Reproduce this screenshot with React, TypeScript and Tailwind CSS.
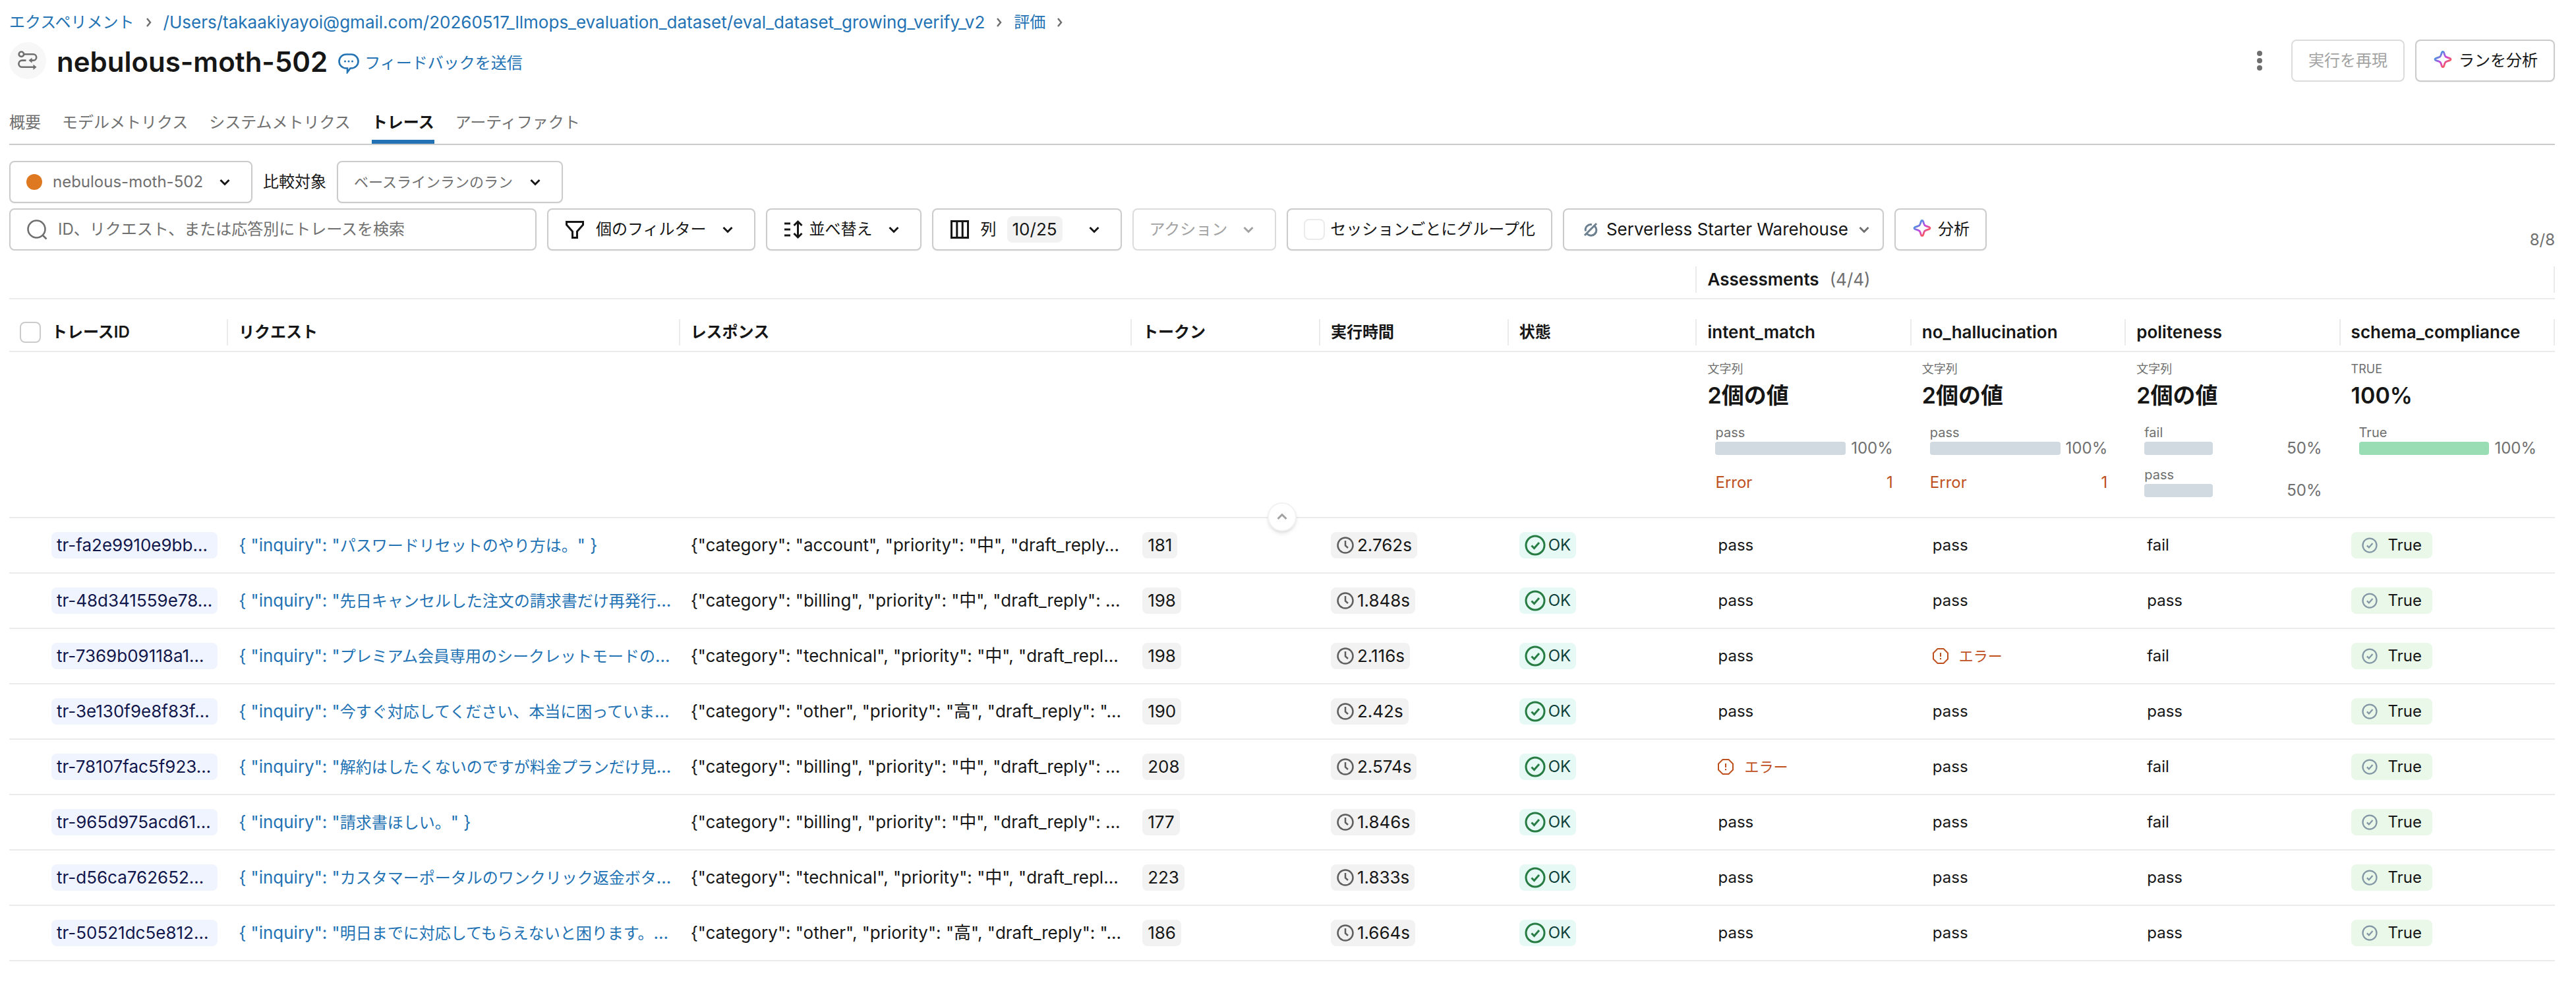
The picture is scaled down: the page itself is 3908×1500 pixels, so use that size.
import { useId, useState } from "react"
import type { ReactNode } from "react"
import { clsx } from "clsx"

const breadcrumbs = [
  { label: "エクスペリメント", className: "text-2xl" },
  {
    label: "/Users/takaakiyayoi@gmail.com/20260517_llmops_evaluation_dataset/eval_dataset_growing_verify_v2",
    className: "text-[26px]",
  },
  { label: "評価", className: "text-2xl" },
]

const tabs = ["概要", "モデルメトリクス", "システムメトリクス", "トレース", "アーティファクト"]

const columns = ["リクエスト", "レスポンス", "トークン", "実行時間", "状態"]

type Assessment = {
  name: string
  type: string
  value: string
  bars: { label: string; percent: number }[]
  barClass: string
  errors?: number
}

const assessments: Assessment[] = [
  { name: "intent_match", type: "文字列", value: "2個の値", bars: [{ label: "pass", percent: 100 }], barClass: "bg-[#d1d9e1]", errors: 1 },
  { name: "no_hallucination", type: "文字列", value: "2個の値", bars: [{ label: "pass", percent: 100 }], barClass: "bg-[#d1d9e1]", errors: 1 },
  {
    name: "politeness",
    type: "文字列",
    value: "2個の値",
    bars: [
      { label: "fail", percent: 50 },
      { label: "pass", percent: 50 },
    ],
    barClass: "bg-[#d1d9e1]",
  },
  { name: "schema_compliance", type: "TRUE", value: "100%", bars: [{ label: "True", percent: 100 }], barClass: "bg-[#99ddb4]" },
]

const traces = [
  { id: "tr-fa2e9910e9bb...", inquiry: "パスワードリセットのやり方は。", end: '" }', response: '{"category": "account", "priority": "中", "draft_reply...', tokens: 181, time: "2.762s", results: ["pass", "pass", "fail"] },
  { id: "tr-48d341559e78...", inquiry: "先日キャンセルした注文の請求書だけ再発行", end: "...", response: '{"category": "billing", "priority": "中", "draft_reply": ...', tokens: 198, time: "1.848s", results: ["pass", "pass", "pass"] },
  { id: "tr-7369b09118a1...", inquiry: "プレミアム会員専用のシークレットモードの", end: "...", response: '{"category": "technical", "priority": "中", "draft_repl...', tokens: 198, time: "2.116s", results: ["pass", "error", "fail"] },
  { id: "tr-3e130f9e8f83f...", inquiry: "今すぐ対応してください、本当に困っていま", end: "...", response: '{"category": "other", "priority": "高", "draft_reply": "...', tokens: 190, time: "2.42s", results: ["pass", "pass", "pass"] },
  { id: "tr-78107fac5f923...", inquiry: "解約はしたくないのですが料金プランだけ見", end: "...", response: '{"category": "billing", "priority": "中", "draft_reply": ...', tokens: 208, time: "2.574s", results: ["error", "pass", "fail"] },
  { id: "tr-965d975acd61...", inquiry: "請求書ほしい。", end: '" }', response: '{"category": "billing", "priority": "中", "draft_reply": ...', tokens: 177, time: "1.846s", results: ["pass", "pass", "fail"] },
  { id: "tr-d56ca762652...", inquiry: "カスタマーポータルのワンクリック返金ボタ", end: "...", response: '{"category": "technical", "priority": "中", "draft_repl...', tokens: 223, time: "1.833s", results: ["pass", "pass", "pass"] },
  { id: "tr-50521dc5e812...", inquiry: "明日までに対応してもらえないと困ります。", end: "...", response: '{"category": "other", "priority": "高", "draft_reply": "...', tokens: 186, time: "1.664s", results: ["pass", "pass", "pass"] },
]

const control = "flex h-16 items-center rounded-lg border-2 border-[#cbcbcb] bg-white shadow-xs whitespace-nowrap"

function Chevron({ className }: { className?: string }) {
  return (
    <svg viewBox="0 0 32 32" fill="none" stroke="currentColor" strokeWidth="3" className={clsx("pointer-events-none size-8 shrink-0", className)}>
      <path d="M9.500 13l6.500 6.500 6.500-6.500" />
    </svg>
  )
}

function Sparkle() {
  const id = useId()
  return (
    <svg viewBox="0 0 32 32" fill="none" className="size-8 shrink-0">
      <defs>
        <linearGradient id={id} x1="5" y1="4" x2="26" y2="26" gradientUnits="userSpaceOnUse">
          <stop offset="0.15" stopColor="#4299e0" />
          <stop offset="0.5" stopColor="#ca42e0" />
          <stop offset="0.85" stopColor="#ff5f46" />
        </linearGradient>
      </defs>
      <path
        d="M16 2.500c.9 0 1.400.6 1.700 1.500l1.100 3.700c.5 1.700 1.500 2.700 3.200 3.200l4.500 1.400c2 .7 2 2.700 0 3.400l-4.500 1.400c-1.700.5-2.700 1.500-3.200 3.200L17.700 24c-.6 2-2.800 2-3.400 0l-1.100-3.700c-.5-1.700-1.500-2.700-3.200-3.200l-4.500-1.400c-2-.7-2-2.700 0-3.400l4.500-1.400c1.700-.5 2.700-1.500 3.200-3.200L14.300 4c.3-.9.8-1.500 1.700-1.500z"
        stroke={`url(#${id})`}
        strokeWidth="2.800"
        strokeLinejoin="round"
      />
    </svg>
  )
}

function RunIcon() {
  return (
    <svg viewBox="0 0 30 30" fill="none" stroke="currentColor" strokeWidth="2.600" className="size-[30px]">
      <circle cx="5.400" cy="5.200" r="3.700" />
      <path d="M9.500 5.200h14a4.700 4.700 0 0 1 0 9.400H20" />
      <path d="M12.500 14.600H6.500a5 5 0 0 0 0 10.200H25" />
      <path d="M21.500 10.500v8.200l-5-4.100zM23.500 20.700v8.200l5-4.100z" fill="currentColor" stroke="none" />
    </svg>
  )
}

function FeedbackIcon() {
  return (
    <svg viewBox="0 0 32 32" fill="none" className="size-8">
      <path
        d="M12 2.500h8a10.500 10.500 0 0 1 0 21h-1.500L14 29.500v-6h-2a10.500 10.500 0 0 1 0-21z"
        stroke="currentColor"
        strokeWidth="2.600"
      />
      <circle cx="10.500" cy="13" r="1.500" fill="currentColor" />
      <circle cx="16" cy="13" r="1.500" fill="currentColor" />
      <circle cx="21.500" cy="13" r="1.500" fill="currentColor" />
    </svg>
  )
}

function CheckCircle({ className }: { className: string }) {
  return (
    <svg viewBox="0 0 32 32" fill="none" stroke="currentColor" strokeWidth="3" className={className}>
      <circle cx="16" cy="16" r="14" />
      <path d="M10.500 16.500l4 4 7.500-8.500" />
    </svg>
  )
}

function ErrorResult() {
  return (
    <span className="flex items-center gap-4 pl-4 text-[22px] text-[#be501e]">
      <svg viewBox="0 0 24 24" fill="none" stroke="currentColor" strokeWidth="2" className="size-6">
        <path d="M7.500 1h9L23 7.500v9L16.500 23h-9L1 16.500v-9z" />
        <path d="M12 7v6M12 15v2.200" />
      </svg>
      エラー
    </span>
  )
}

function HeaderCell({ children, className }: { children?: ReactNode; className?: string }) {
  return (
    <div className="flex h-[78px] items-end pb-2">
      <div className={clsx("flex h-10 flex-1 items-center border-r-2 border-[#ebebeb] pl-4", className)}>{children}</div>
    </div>
  )
}

function Summary({ item }: { item: Assessment }) {
  return (
    <div className="flex h-[250px] flex-col px-4 pt-3">
      <span className="text-lg leading-7 text-[#6f6f6f]">{item.type}</span>
      <span className="text-[34px] leading-[52px] font-semibold">{item.value}</span>
      <div className="flex flex-col gap-4 px-3 pt-4 text-[#6f6f6f]">
        {item.bars.map((bar) => (
          <div key={bar.label}>
            <div className="text-xl leading-7">{bar.label}</div>
            <div className="flex h-5 items-center gap-2">
              <div className="flex-1">
                <div className={clsx("h-5 rounded", item.barClass)} style={{ width: `${bar.percent}%` }} />
              </div>
              <span>{bar.percent}%</span>
            </div>
          </div>
        ))}
        {item.errors && (
          <div className="flex justify-between pt-[10px] text-[#be501e]">
            <span>Error</span>
            <span>{item.errors}</span>
          </div>
        )}
      </div>
    </div>
  )
}

export default function App() {
  const [activeTab, setActiveTab] = useState("トレース")
  const [showSummary, setShowSummary] = useState(true)

  return (
    <main className="min-h-screen bg-white pr-8 pl-[14px] font-['Inter','Noto_Sans_CJK_JP',sans-serif] text-2xl leading-8 text-[#161616]">
      <nav className="flex items-center gap-4 pt-[18px] text-[#2272b4]">
        {breadcrumbs.map((crumb) => (
          <span key={crumb.label} className="flex items-center gap-4">
            <a href="#" className={clsx("leading-8 hover:underline", crumb.className)}>{crumb.label}</a>
            <svg viewBox="0 0 12 16" fill="none" stroke="#6f6f6f" strokeWidth="2.500" className="h-4 w-3">
              <path d="M3 2l5 6-5 6" />
            </svg>
          </span>
        ))}
      </nav>

      <header className="mt-[10px] flex h-16 items-center justify-between">
        <div className="flex items-center gap-4">
          <span className="flex size-14 items-center justify-center rounded-full bg-[#f7f7f7] text-[#6f6f6f]">
            <RunIcon />
          </span>
          <h1 className="pt-1 text-[42px] leading-[52px] font-semibold">nebulous-moth-502</h1>
          <a href="#" className="flex items-center gap-2 pt-2 text-[#2272b4]">
            <FeedbackIcon />
            フィードバックを送信
          </a>
        </div>
        <div className="flex items-center gap-4">
          <button aria-label="その他" className="flex size-16 items-center justify-center text-[#6f6f6f]">
            <svg viewBox="0 0 8 32" fill="currentColor" className="h-8 w-2">
              <circle cx="4" cy="5" r="4" />
              <circle cx="4" cy="16" r="4" />
              <circle cx="4" cy="27" r="4" />
            </svg>
          </button>
          <button disabled className="flex h-16 items-center rounded-lg border-2 border-[#dcdcdc] px-6 text-[#a2a2a2]">
            実行を再現
          </button>
          <button className={clsx(control, "gap-2 px-6")}>
            <Sparkle />
            ランを分析
          </button>
        </div>
      </header>

      <div role="tablist" className="mt-6 flex gap-8 border-b-2 border-[#cbcbcb]">
        {tabs.map((tab) => (
          <button
            key={tab}
            role="tab"
            aria-selected={tab === activeTab}
            onClick={() => setActiveTab(tab)}
            className={clsx(
              "flex h-[70px] items-center border-b-6 pt-3",
              tab === activeTab ? "border-[#2272b4] font-semibold" : "border-transparent text-[#6f6f6f]",
            )}
          >
            {tab}
          </button>
        ))}
      </div>

      <div className="mt-6 flex items-center gap-4">
        <div className={clsx(control, "gap-4 px-6")}>
          <span className="size-6 rounded-full bg-[#de7921]" />
          <select aria-label="ラン" className="appearance-none bg-transparent text-[#6f6f6f] outline-none">
            <option>nebulous-moth-502</option>
          </select>
          <Chevron />
        </div>
        <label htmlFor="baseline">比較対象</label>
        <div className={clsx(control, "gap-4 px-6")}>
          <select id="baseline" className="appearance-none bg-transparent text-[22px] text-[#6f6f6f] outline-none">
            <option>ベースラインランのラン</option>
          </select>
          <Chevron />
        </div>
      </div>

      <div className="mt-2 flex items-end justify-between">
        <div className="flex gap-4">
          <label className="flex h-16 w-200 items-center gap-4 rounded-lg border-2 border-[#cbcbcb] px-6 text-[#6f6f6f]">
            <svg viewBox="0 0 32 32" fill="none" stroke="currentColor" strokeWidth="2.600" className="size-8 shrink-0">
              <circle cx="15.500" cy="15.500" r="13" />
              <path d="M24.500 24.500l6 6" />
            </svg>
            <input
              type="text"
              aria-label="トレースを検索"
              placeholder="ID、リクエスト、または応答別にトレースを検索"
              className="flex-1 bg-transparent outline-none placeholder:text-[#6f6f6f]"
            />
          </label>
          <button className={clsx(control, "gap-4 px-6")}>
            <svg viewBox="0 0 32 32" fill="none" stroke="currentColor" strokeWidth="3" className="size-8">
              <path d="M3.500 4.500h25v4.500l-9 10v9.500h-7V19l-9-10z" />
            </svg>
            個のフィルター
            <Chevron />
          </button>
          <button className={clsx(control, "px-6")}>
            <svg viewBox="0 0 32 32" fill="none" stroke="currentColor" strokeWidth="3" className="mr-2 size-8">
              <path d="M2 7h9M2 16h9M2 25h9" />
              <path d="M22.500 4.500v23M16.500 10l6-6 6 6M16.500 22l6 6 6-6" />
            </svg>
            並べ替え
            <Chevron className="ml-4" />
          </button>
          <button className={clsx(control, "gap-4 px-6")}>
            <svg viewBox="0 0 32 32" fill="none" stroke="currentColor" strokeWidth="3" className="size-8">
              <path d="M3.500 3.500h25v25h-25zM11.800 3.500v25M20.200 3.500v25" />
            </svg>
            列
            <span className="rounded-lg bg-[#f2f2f2] px-2 py-1 text-[26px] leading-8">10/25</span>
            <Chevron className="ml-4" />
          </button>
          <button disabled className="flex h-16 items-center gap-4 rounded-lg border-2 border-[#dcdcdc] px-6 text-[#a2a2a2]">
            アクション
            <Chevron />
          </button>
          <label className={clsx(control, "gap-2 px-6")}>
            <input type="checkbox" className="size-8 appearance-none rounded-lg border-2 border-[#ebebeb] checked:bg-[#2272b4]" />
            セッションごとにグループ化
          </label>
          <div className={clsx(control, "gap-2 pr-3 pl-6")}>
            <svg viewBox="0 0 32 32" fill="none" stroke="#6c7f8e" strokeWidth="3" className="size-8">
              <path d="M8.500 18.500a8 8 0 0 1 9.500-9.700M22.300 11a7.800 7.800 0 0 1-11.300 12M7 25L25 7" />
            </svg>
            <select aria-label="ウェアハウス" className="appearance-none bg-transparent text-[26px] leading-8 outline-none">
              <option>Serverless Starter Warehouse</option>
            </select>
            <Chevron className="text-[#6f6f6f]" />
          </div>
          <button className={clsx(control, "gap-2 px-6")}>
            <Sparkle />
            分析
          </button>
        </div>
        <span className="text-[#6f6f6f]">8/8</span>
      </div>

      <div className="relative">
        <table className="w-full table-fixed border-separate border-spacing-0 text-left [&_td]:border-b-2 [&_td]:border-[#ebebeb] [&_td]:p-0 [&_th]:border-b-2 [&_th]:border-[#ebebeb] [&_th]:p-0 [&_th]:font-semibold">
          <colgroup>
            <col className="w-[8.6%]" />
            <col className="w-[17.75%]" />
            <col className="w-[17.75%]" />
            <col className="w-[7.4%]" />
            <col className="w-[7.4%]" />
            <col className="w-[7.4%]" />
            <col />
            <col />
            <col />
            <col />
          </colgroup>
          <thead>
            <tr>
              <th colSpan={6}>
                <div className="flex h-[72px] items-end pb-2">
                  <div className="h-10 flex-1 border-r-2 border-[#ebebeb]" />
                </div>
              </th>
              <th colSpan={4}>
                <div className="flex h-[72px] items-end pb-2">
                  <div className="flex h-10 flex-1 items-center gap-4 border-r-2 border-[#ebebeb] pl-4 text-[26px] leading-8">
                    Assessments
                    <span className="font-normal text-[#6f6f6f]">(4/4)</span>
                  </div>
                </div>
              </th>
            </tr>
            <tr>
              <th>
                <HeaderCell className="gap-4">
                  <input type="checkbox" aria-label="すべて選択" className="size-8 appearance-none rounded-lg border-2 border-[#cbcbcb] checked:bg-[#2272b4]" />
                  トレースID
                </HeaderCell>
              </th>
              {columns.map((column) => (
                <th key={column}>
                  <HeaderCell>{column}</HeaderCell>
                </th>
              ))}
              {assessments.map((item) => (
                <th key={item.name}>
                  <HeaderCell className="text-[26px] leading-8">{item.name}</HeaderCell>
                </th>
              ))}
            </tr>
          </thead>
          <tbody>
            {showSummary && (
              <tr>
                <td colSpan={6} />
                {assessments.map((item) => (
                  <td key={item.name} className="align-top">
                    <Summary item={item} />
                  </td>
                ))}
              </tr>
            )}
            {traces.map((trace) => (
              <tr key={trace.id} className="h-[84px] whitespace-nowrap">
                <td>
                  <div className="mr-4 ml-16 rounded-lg bg-[#f0f4ff] px-2 py-1 text-[26px] leading-8 text-[#12174b]">{trace.id}</div>
                </td>
                <td>
                  <a href="#" className="block pl-4 text-[26px] leading-8 text-[#2272b4]">
                    {'{ "inquiry": "'}
                    <span className="text-2xl">{trace.inquiry}</span>
                    {trace.end}
                  </a>
                </td>
                <td>
                  <div className="pl-4 text-[26px] leading-8">{trace.response}</div>
                </td>
                <td>
                  <span className="ml-4 inline-block rounded-lg bg-[#f2f2f2] px-2 py-1 align-middle text-[26px] leading-8">{trace.tokens}</span>
                </td>
                <td>
                  <span className="ml-4 inline-flex items-center gap-1 rounded-lg bg-[#f2f2f2] px-2 py-1 align-middle text-[26px] leading-8">
                    <svg viewBox="0 0 28 28" fill="none" stroke="#5f5f5f" strokeWidth="2.500" className="size-7">
                      <circle cx="14" cy="14" r="11.500" />
                      <path d="M14 7v7.500l4 3.500" />
                    </svg>
                    {trace.time}
                  </span>
                </td>
                <td>
                  <span className="ml-4 inline-flex items-center gap-1 rounded-lg bg-[#e6f9f4] px-2 py-1 align-middle text-[#0f3f3a]">
                    <CheckCircle className="size-8 text-[#277c43]" />
                    OK
                  </span>
                </td>
                {trace.results.map((result, i) => (
                  <td key={i}>
                    <div className="pl-4">{result === "error" ? <ErrorResult /> : <span className="pl-4">{result}</span>}</div>
                  </td>
                ))}
                <td>
                  <span className="ml-4 inline-flex items-center gap-4 rounded-lg bg-[#e9f8e8] px-4 py-1 align-middle">
                    <CheckCircle className="size-6 text-[#8396a5]" />
                    True
                  </span>
                </td>
              </tr>
            ))}
          </tbody>
        </table>
        <button
          aria-label="サマリーを切り替え"
          onClick={() => setShowSummary(!showSummary)}
          className="absolute top-[382px] left-1/2 flex size-11 -translate-x-1/2 items-center justify-center rounded-full border-2 border-[#f2f2f2] bg-white text-[#a2a2a2] shadow-md"
        >
          <Chevron className="rotate-180" />
        </button>
      </div>
    </main>
  )
}
